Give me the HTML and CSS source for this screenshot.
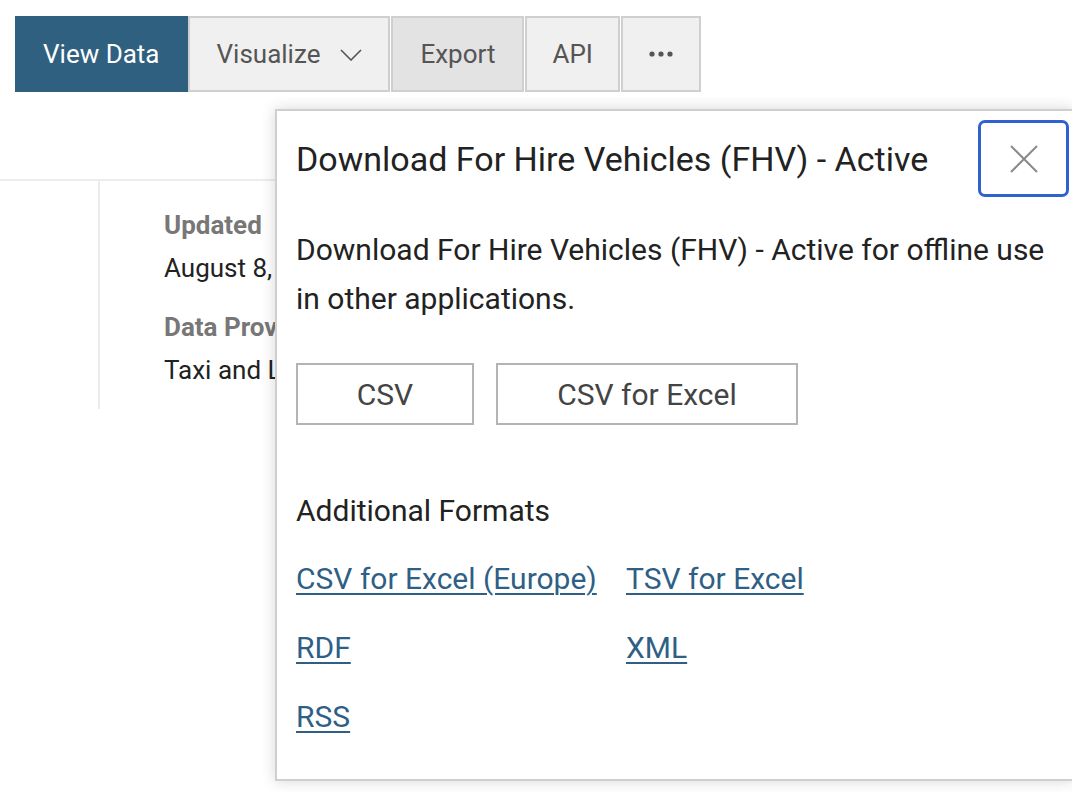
FILE: index.html
```html
<!DOCTYPE html>
<html lang="en">
<head>
<meta charset="utf-8">
<title>Download</title>
<link rel="stylesheet" href="styles.css">
</head>
<body>
<div class="page">
  <div class="toolbar">
    <button class="tb tb-primary">View Data</button>
    <button class="tb tb-drop">Visualize
      <svg class="chev" width="22" height="12" viewBox="0 0 22 12"><path d="M1 1 L11 11 L21 1" fill="none" stroke="#555" stroke-width="1.6"/></svg>
    </button>
    <button class="tb tb-active">Export</button>
    <button class="tb tb-api">API</button>
    <button class="tb tb-more"><svg width="24" height="6" viewBox="0 0 24 6"><circle cx="3" cy="3" r="2.6" fill="#555"/><circle cx="12" cy="3" r="2.6" fill="#555"/><circle cx="21" cy="3" r="2.6" fill="#555"/></svg></button>
  </div>
  <div class="content">
    <div class="side"></div>
    <div class="meta">
      <div class="meta-item">
        <div class="meta-label">Updated</div>
        <div class="meta-value">August 8, 2019</div>
      </div>
      <div class="meta-item">
        <div class="meta-label">Data Provided By</div>
        <div class="meta-value">Taxi and Limousine Commission (TLC)</div>
      </div>
    </div>
  </div>

  <div class="popover">
    <div class="pop-head">
      <h2 class="pop-title">Download For Hire Vehicles (FHV) - Active</h2>
      <button class="close" aria-label="Close">
        <svg width="30" height="30" viewBox="0 0 30 30"><path d="M2 2 L28 28 M28 2 L2 28" stroke="#8a8a8a" stroke-width="2" fill="none"/></svg>
      </button>
    </div>
    <p class="pop-desc">Download For Hire Vehicles (FHV) - Active for offline use in other applications.</p>
    <div class="pop-buttons">
      <button class="fmt fmt-csv">CSV</button>
      <button class="fmt fmt-excel">CSV for Excel</button>
    </div>
    <h3 class="pop-sub">Additional Formats</h3>
    <div class="links">
      <a href="#" class="link">CSV for Excel (Europe)</a>
      <a href="#" class="link">TSV for Excel</a>
      <a href="#" class="link">RDF</a>
      <a href="#" class="link">XML</a>
      <a href="#" class="link">RSS</a>
    </div>
  </div>
</div>
</body>
</html>
```

FILE: styles.css
```css
html, body {
  margin: 0;
  padding: 0;
  background: #fff;
  font-family: Roboto, "Liberation Sans", sans-serif;
  color: #222;
  overflow: hidden;
}

.page {
  position: relative;
  width: 1072px;
  height: 792px;
}

.toolbar {
  display: flex;
  align-items: flex-start;
  padding: 16px 0 0 15px;
  height: 181px;
  box-sizing: border-box;
  border-bottom: 2px solid #ececec;
}

.tb {
  font-family: Roboto, "Liberation Sans", sans-serif;
  font-size: 26px;
  color: #555;
  background: #f0f0f0;
  border: 2px solid #cfcfcf;
  height: 76px;
  padding: 0 27px;
  margin: 0 1px 0 0;
  display: flex;
  align-items: center;
  gap: 20px;
  cursor: pointer;
}

.tb-primary {
  background: #30607f;
  color: #fff;
  border: none;
  padding: 0 28px;
  margin-right: 0;
}

.tb-drop {
  padding: 0 26px 0 27px;
}

.tb-active {
  background: #e3e3e3;
}

.tb-api {
  padding: 0 25px;
}

.tb-more {
  padding: 0 26px;
}

.chev {
  margin-top: 2px;
}

.content {
  display: flex;
}

.side {
  width: 98px;
  height: 228px;
  border-right: 2px solid #ececec;
}

.meta {
  padding: 23px 0 0 64px;
}

.meta-item {
  margin-bottom: 16px;
}

.meta-label {
  font-size: 26px;
  font-weight: 700;
  color: #777;
  line-height: 43px;
}

.meta-value {
  font-size: 26px;
  color: #222;
  line-height: 43px;
  white-space: nowrap;
}

.popover {
  position: absolute;
  left: 275px;
  top: 109px;
  width: 800px;
  height: 672px;
  box-sizing: border-box;
  background: #fff;
  border: 2px solid #cfcfcf;
  box-shadow: 0 0 14px rgba(0, 0, 0, 0.16);
  padding: 9px 4px 0 19px;
}

.pop-head {
  display: flex;
  align-items: center;
  justify-content: space-between;
}

.pop-title {
  margin: 0;
  font-size: 34px;
  font-weight: 400;
  line-height: 40px;
  color: #222;
}

.close {
  width: 91px;
  height: 77px;
  border: 3px solid #2f62d0;
  border-radius: 7px;
  background: #fff;
  display: flex;
  align-items: center;
  justify-content: center;
  padding: 0;
}

.pop-desc {
  margin: 28px 0 0;
  font-size: 30px;
  line-height: 49px;
  color: #222;
  width: 760px;
}

.pop-buttons {
  display: flex;
  gap: 22px;
  margin-top: 40px;
}

.fmt {
  font-family: Roboto, "Liberation Sans", sans-serif;
  font-size: 30px;
  color: #444;
  background: #fff;
  border: 2px solid #b4b4b4;
  height: 62px;
  padding: 0;
}

.fmt-csv {
  width: 178px;
}

.fmt-excel {
  width: 302px;
}

.pop-sub {
  margin: 61px 0 0;
  font-size: 30px;
  font-weight: 400;
  line-height: 49px;
  color: #222;
}

.links {
  display: grid;
  grid-template-columns: 330px 330px;
  row-gap: 20px;
  margin-top: 19px;
}

.link {
  font-size: 30px;
  line-height: 49px;
  color: #2f5f85;
  text-decoration: underline;
  text-decoration-thickness: 2px;
  text-underline-offset: 4px;
  justify-self: start;
}
```
